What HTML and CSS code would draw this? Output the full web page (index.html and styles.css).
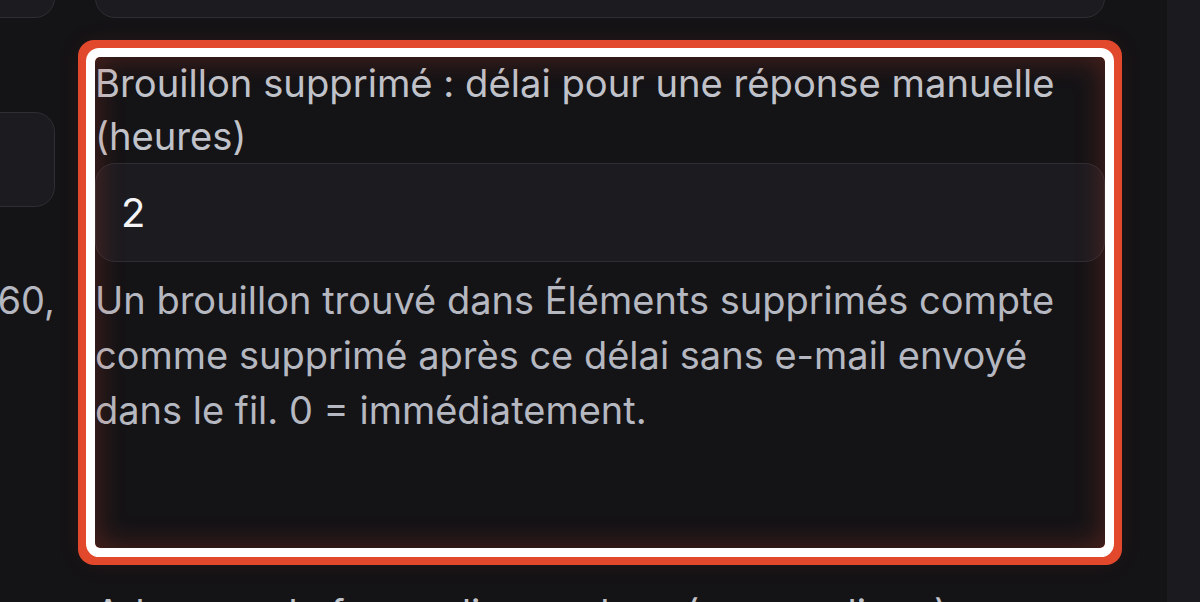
FILE: index.html
```html
<!DOCTYPE html>
<html lang="fr">
<head>
<meta charset="utf-8">
<title>Paramètres</title>
<link rel="stylesheet" href="styles.css">
</head>
<body>
<div class="app">
  <main class="main">
    <div class="form">
      <div class="field">
        <div class="control select">Toutes les boîtes</div>
      </div>
      <div class="field">
        <input class="control" type="text" value="24">
      </div>

      <div class="field">
        <label class="label">Délai de relance (minutes)</label>
        <div class="control select short">30</div>
        <p class="hint">Temps d'attente avant qu'une relance soit proposée pour un message<br>resté sans réponse dans la boîte de réception. Valeurs usuelles : 15, 30, 60,<br>120 ou 240. Une valeur plus courte augmente le nombre de<br>notifications envoyées au cours de la journée de travail.<br>Laisser vide pour utiliser la valeur par défaut définie par<br>l'administrateur.</p>
      </div>
      <div class="field highlight">
        <label class="label" for="draft-delay">Brouillon supprimé : délai pour une réponse manuelle (heures)</label>
        <input class="control" id="draft-delay" type="text" value="2">
        <p class="hint">Un brouillon trouvé dans Éléments supprimés compte comme supprimé après ce délai sans e-mail envoyé dans le fil. 0 = immédiatement.</p>
      </div>

      <div class="field">
        <label class="label">Fuseau horaire</label>
      </div>
      <div class="field">
        <label class="label">Adresses de forwarding exclues (une par ligne)</label>
      </div>
    </div>
  </main>
  <aside class="side"></aside>
</div>
</body>
</html>
```
FILE: styles.css
```css
* { box-sizing: border-box; }

html, body {
  margin: 0;
  height: 100%;
  background: #141316;
  overflow: hidden;
}

body {
  font-family: Inter, "Noto Sans", sans-serif;
  color: #bfc2c9;
}

.app {
  display: flex;
  height: 100%;
}

.main {
  flex: 1;
  min-width: 0;
  display: flex;
  justify-content: flex-end;
  align-items: flex-start;
  padding-right: 62px;
  overflow: hidden;
}

.side {
  width: 33px;
  flex-shrink: 0;
  background: #1b1a1e;
}

.form {
  flex-shrink: 0;
  display: grid;
  grid-template-columns: max-content 1010px;
  column-gap: 40px;
  row-gap: 39px;
  margin-top: -81px;
}

.field {
  display: flex;
  flex-direction: column;
  min-width: 0;
}

.label {
  font-size: 38.2px;
  line-height: 53px;
  color: #c0c3ca;
}

.control {
  display: flex;
  align-items: center;
  width: 100%;
  height: 99px;
  padding: 0 25px;
  background: #1c1b20;
  border: 1.5px solid #2f2e34;
  border-radius: 20px;
  font-family: inherit;
  font-size: 40px;
  color: #f4f4f6;
  outline: none;
}

.control.short {
  height: 95px;
  margin-top: 2px;
}

.hint {
  margin: 11px 0 0;
  font-size: 38px;
  line-height: 55px;
  color: #b5b8c0;
}

.highlight {
  position: relative;
  border-radius: 5px;
  box-shadow:
    0 0 0 9px #ffffff,
    0 0 0 17px #e2482c,
    0 0 26px 14px rgba(226, 72, 44, 0.10);
}

.highlight::after {
  content: "";
  position: absolute;
  inset: 0;
  border-radius: 5px;
  box-shadow: inset 0 0 30px rgba(226, 72, 44, 0.30);
  pointer-events: none;
}
```
